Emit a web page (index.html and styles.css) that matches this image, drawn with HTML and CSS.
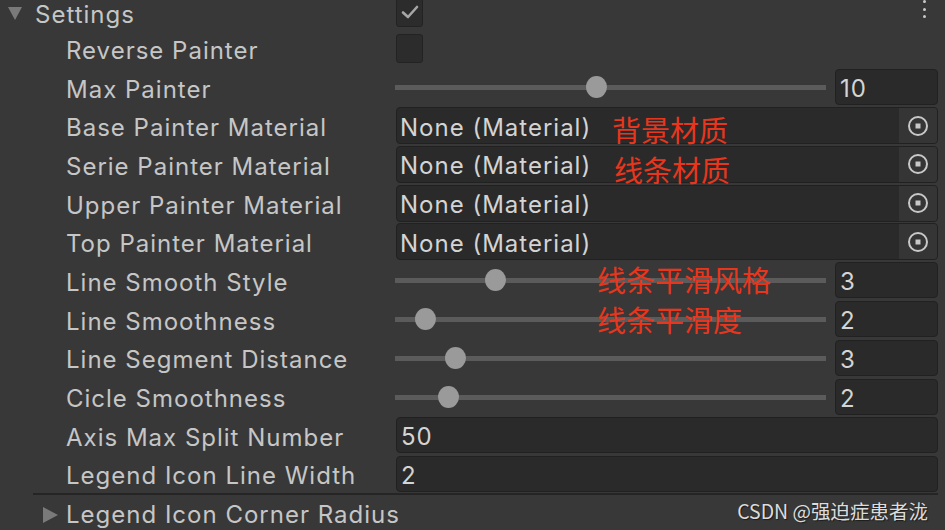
FILE: index.html
```html
<!DOCTYPE html>
<html>
<head>
<meta charset="utf-8">
<link rel="stylesheet" href="styles.css">
</head>
<body>
<div class="inspector">
  <div class="row header">
    <div class="label-cell head"><span class="foldout down"></span><span class="label">Settings</span></div>
    <div class="field-cell head-field">
      <div class="checkbox"><svg width="20" height="16" viewBox="0 0 20 16"><path d="M3 8.5 L8 13 L17 3" fill="none" stroke="#a6a6a6" stroke-width="2.6" stroke-linecap="round" stroke-linejoin="round"/></svg></div>
      <div class="kebab"><i></i><i></i><i></i></div>
    </div>
  </div>
  <div class="row">
    <div class="label-cell"><span class="label">Reverse Painter</span></div>
    <div class="field-cell"><div class="checkbox"></div></div>
  </div>
  <div class="row">
    <div class="label-cell"><span class="label">Max Painter</span></div>
    <div class="field-cell slider"><div class="track-wrap"><div class="track"></div><div class="thumb" style="--p:0.467"></div></div><div class="numfield">10</div></div>
  </div>
  <div class="row">
    <div class="label-cell"><span class="label">Base Painter Material</span></div>
    <div class="field-cell"><div class="objfield"><span class="value">None (Material)</span><span class="picker"><svg width="22" height="22" viewBox="0 0 22 22"><circle cx="11" cy="11" r="9" fill="none" stroke="#c8c8c8" stroke-width="2"/><rect x="8.5" y="8.5" width="5" height="5" fill="#c8c8c8"/></svg></span></div></div>
  </div>
  <div class="row">
    <div class="label-cell"><span class="label">Serie Painter Material</span></div>
    <div class="field-cell"><div class="objfield"><span class="value">None (Material)</span><span class="picker"><svg width="22" height="22" viewBox="0 0 22 22"><circle cx="11" cy="11" r="9" fill="none" stroke="#c8c8c8" stroke-width="2"/><rect x="8.5" y="8.5" width="5" height="5" fill="#c8c8c8"/></svg></span></div></div>
  </div>
  <div class="row">
    <div class="label-cell"><span class="label">Upper Painter Material</span></div>
    <div class="field-cell"><div class="objfield"><span class="value">None (Material)</span><span class="picker"><svg width="22" height="22" viewBox="0 0 22 22"><circle cx="11" cy="11" r="9" fill="none" stroke="#c8c8c8" stroke-width="2"/><rect x="8.5" y="8.5" width="5" height="5" fill="#c8c8c8"/></svg></span></div></div>
  </div>
  <div class="row">
    <div class="label-cell"><span class="label">Top Painter Material</span></div>
    <div class="field-cell"><div class="objfield"><span class="value">None (Material)</span><span class="picker"><svg width="22" height="22" viewBox="0 0 22 22"><circle cx="11" cy="11" r="9" fill="none" stroke="#c8c8c8" stroke-width="2"/><rect x="8.5" y="8.5" width="5" height="5" fill="#c8c8c8"/></svg></span></div></div>
  </div>
  <div class="row">
    <div class="label-cell"><span class="label">Line Smooth Style</span></div>
    <div class="field-cell slider"><div class="track-wrap"><div class="track"></div><div class="thumb" style="--p:0.219"></div></div><div class="numfield">3</div></div>
  </div>
  <div class="row">
    <div class="label-cell"><span class="label">Line Smoothness</span></div>
    <div class="field-cell slider"><div class="track-wrap"><div class="track"></div><div class="thumb" style="--p:0.049"></div></div><div class="numfield">2</div></div>
  </div>
  <div class="row">
    <div class="label-cell"><span class="label">Line Segment Distance</span></div>
    <div class="field-cell slider"><div class="track-wrap"><div class="track"></div><div class="thumb" style="--p:0.124"></div></div><div class="numfield">3</div></div>
  </div>
  <div class="row">
    <div class="label-cell"><span class="label">Cicle Smoothness</span></div>
    <div class="field-cell slider"><div class="track-wrap"><div class="track"></div><div class="thumb" style="--p:0.107"></div></div><div class="numfield">2</div></div>
  </div>
  <div class="row">
    <div class="label-cell"><span class="label">Axis Max Split Number</span></div>
    <div class="field-cell"><div class="textfield">50</div></div>
  </div>
  <div class="row">
    <div class="label-cell"><span class="label">Legend Icon Line Width</span></div>
    <div class="field-cell"><div class="textfield">2</div></div>
  </div>
  <div class="row folded">
    <div class="label-cell"><span class="foldout right"></span><span class="label">Legend Icon Corner Radius</span></div>
    <div class="field-cell"></div>
  </div>
</div>
<div class="note note-1">背景材质</div>
<div class="note note-2">线条材质</div>
<div class="note note-3">线条平滑风格</div>
<div class="note note-4">线条平滑度</div>
<div class="watermark">CSDN @强迫症患者泷</div>
</body>
</html>
```
FILE: styles.css
```css
html, body {
  margin: 0;
  padding: 0;
}
body {
  position: relative;
  width: 945px;
  height: 530px;
  overflow: hidden;
  background: #383838;
  font-family: Inter, "Noto Sans", "Noto Sans CJK SC", sans-serif;
  color: #c4c4c4;
}
.inspector {
  margin-top: -5px;
  padding-right: 7px;
}
.row {
  display: grid;
  grid-template-columns: 395px 1fr;
  align-items: center;
  height: 38.7px;
}
.row.header {
  height: 34px;
}
.label-cell {
  display: flex;
  align-items: center;
  padding-left: 66px;
  height: 100%;
  position: relative;
}
.label-cell.head {
  padding-left: 8px;
}
.label {
  font-size: 24px;
  letter-spacing: 1px;
  padding-top: 4px;
  white-space: nowrap;
  color: #c6c6c6;
}
.head .label {
  margin-left: 13px;
}
.foldout {
  width: 0;
  height: 0;
  display: inline-block;
}
.foldout.down {
  border-left: 7px solid transparent;
  border-right: 7px solid transparent;
  border-top: 13px solid #7a7a7a;
  margin-top: 2px;
}
.foldout.right {
  border-top: 8px solid transparent;
  border-bottom: 8px solid transparent;
  border-left: 15px solid #7a7a7a;
  position: absolute;
  top: 50%;
  margin-top: -8px;
}
.folded {
  border-top: 2px solid #252525;
  margin-left: 33px;
  grid-template-columns: 362px 1fr;
}
.folded .label-cell {
  padding-left: 33px;
}
.folded .label {
  padding-top: 0;
}
.folded .foldout.right {
  left: 10px;
}
.field-cell {
  display: flex;
  align-items: center;
  height: 100%;
}
.head-field {
  justify-content: space-between;
}
.checkbox {
  width: 27px;
  height: 29px;
  box-sizing: border-box;
  margin-left: 1px;
  background: #2c2c2c;
  border: 1px solid #232323;
  border-radius: 3px;
  display: flex;
  align-items: center;
  justify-content: center;
}
.kebab {
  display: flex;
  flex-direction: column;
  gap: 4.5px;
  margin-right: 12px;
  margin-top: -6px;
}
.kebab i {
  display: block;
  width: 3px;
  height: 3px;
  border-radius: 50%;
  background: #c8c8c8;
}
.slider {
  gap: 9px;
}
.track-wrap {
  flex: 1;
  position: relative;
  height: 22px;
}
.track {
  position: absolute;
  left: 0;
  right: 0;
  top: 9px;
  height: 5px;
  background: #5b5b5b;
}
.thumb {
  position: absolute;
  top: 0;
  width: 21px;
  height: 22px;
  margin-left: -10.5px;
  border-radius: 50%;
  background: #9a9a9a;
  left: calc(10px + (100% - 20px) * var(--p));
}
.numfield, .textfield, .objfield {
  box-sizing: border-box;
  height: 36px;
  background: #2a2a2a;
  border: 1px solid #212121;
  border-radius: 4px;
  font-size: 24px;
  letter-spacing: 1px;
  color: #d4d4d4;
  display: flex;
  align-items: center;
  padding-top: 3px;
}
.numfield {
  width: 103px;
  padding-left: 4px;
}
.textfield {
  flex: 1;
  padding-left: 4px;
  margin-left: 1px;
}
.objfield {
  flex: 1;
  margin-left: 1px;
  height: 37px;
  padding-top: 0;
  overflow: hidden;
}
.objfield .value {
  flex: 1;
  padding-left: 3px;
  padding-top: 3px;
  white-space: nowrap;
}
.picker {
  width: 38px;
  align-self: stretch;
  background: #353535;
  display: flex;
  align-items: center;
  justify-content: center;
}
.note {
  position: absolute;
  font-family: "Noto Sans CJK SC", sans-serif;
  font-size: 29px;
  line-height: 1;
  color: #e8361d;
  white-space: nowrap;
}
.note-1 { left: 612px; top: 115px; }
.note-2 { left: 614px; top: 155px; }
.note-3 { left: 597px; top: 265px; }
.note-4 { left: 597px; top: 305px; }
.watermark {
  position: absolute;
  right: 17px;
  top: 501px;
  font-family: "Noto Sans CJK SC", sans-serif;
  font-size: 19.5px;
  line-height: 1;
  color: #dcdcdc;
  text-shadow: 1px 1px 1px rgba(0,0,0,0.5);
  white-space: nowrap;
}
```
